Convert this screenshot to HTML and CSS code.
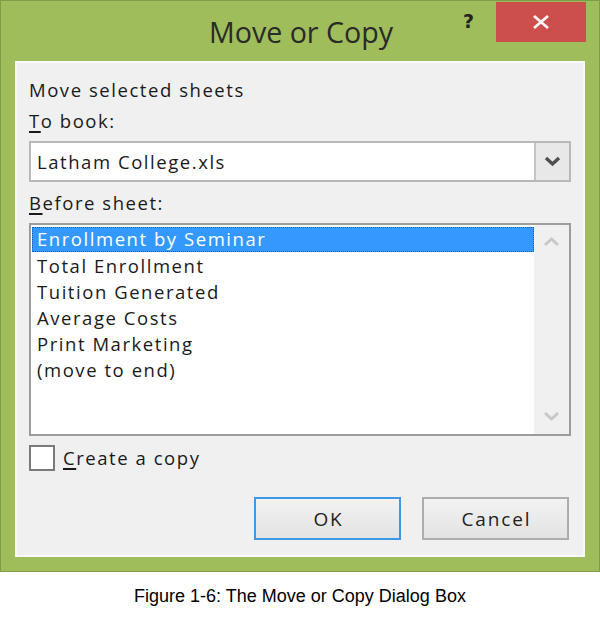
FILE: index.html
```html
<!DOCTYPE html>
<html>
<head>
<meta charset="utf-8">
<link rel="stylesheet" href="styles.css">
</head>
<body>
<div class="window">
  <div class="titlebar">
    <div class="spacer"></div>
    <div class="title">Move or Copy</div>
    <div class="controls">
      <span class="help">?</span>
      <span class="close">
        <svg width="18" height="14" viewBox="0 0 18 14"><path d="M2 1 L16 13 M16 1 L2 13" stroke="#fff" stroke-width="2.6" fill="none"/></svg>
      </span>
    </div>
  </div>
  <div class="panel">
    <div class="label first">Move selected sheets</div>
    <div class="label"><u>T</u>o book:</div>
    <div class="combo">
      <div class="combo-value">Latham College.xls</div>
      <div class="combo-btn">
        <svg width="17" height="11" viewBox="0 0 17 11"><path d="M2 2 L8.5 8 L15 2" stroke="#4f4f4f" stroke-width="3.4" fill="none"/></svg>
      </div>
    </div>
    <div class="label before"><u>B</u>efore sheet:</div>
    <div class="listbox">
      <div class="items">
        <div class="item selected">Enrollment by Seminar</div>
        <div class="item">Total Enrollment</div>
        <div class="item">Tuition Generated</div>
        <div class="item">Average Costs</div>
        <div class="item">Print Marketing</div>
        <div class="item">(move to end)</div>
      </div>
      <div class="scrollbar">
        <svg width="17" height="12" viewBox="0 0 17 12"><path d="M2 9 L8.5 3 L15 9" stroke="#c8c8c8" stroke-width="3" fill="none"/></svg>
        <svg width="17" height="12" viewBox="0 0 17 12"><path d="M2 3 L8.5 9 L15 3" stroke="#c8c8c8" stroke-width="3" fill="none"/></svg>
      </div>
    </div>
    <div class="checkrow">
      <span class="checkbox"></span>
      <span class="checklabel"><u>C</u>reate a copy</span>
    </div>
    <div class="buttons">
      <div class="btn ok">OK</div>
      <div class="btn">Cancel</div>
    </div>
  </div>
</div>
<div class="caption">Figure 1-6: The Move or Copy Dialog Box</div>
</body>
</html>
```
FILE: styles.css
```css
html, body {
  margin: 0;
  padding: 0;
  background: #ffffff;
}
body {
  width: 600px;
  font-family: "Open Sans", "Noto Sans", sans-serif;
}
.window {
  box-sizing: border-box;
  width: 600px;
  height: 572px;
  background: #9fbd5b;
  border: 1px solid #7f9d48;
  display: flex;
  flex-direction: column;
}
.titlebar {
  height: 60px;
  display: grid;
  grid-template-columns: 1fr auto 1fr;
  align-items: start;
}
.title {
  font-size: 28.6px;
  color: #2a2a2a;
  line-height: 40px;
  padding-top: 11px;
  padding-left: 2px;
}
.controls {
  justify-self: end;
  display: flex;
  align-items: flex-start;
  margin-right: 13px;
  margin-top: 1px;
}
.help {
  font-family: "DejaVu Sans", sans-serif;
  font-weight: bold;
  font-size: 19px;
  color: #222;
  line-height: 22px;
  margin-top: 8px;
  margin-right: 22px;
}
.close {
  width: 90px;
  height: 40px;
  background: #cc4f4c;
  display: flex;
  align-items: center;
  justify-content: center;
}
.panel {
  box-sizing: border-box;
  margin: 0 14px 0 14px;
  height: 496px;
  background: #f0f0f0;
  border: 2px solid #f9f9f9;
  padding: 14px 12px 0 12px;
  font-size: 18.5px;
  letter-spacing: 1.55px;
  color: #1a1a1a;
  display: flex;
  flex-direction: column;
}
.label {
  line-height: 26px;
  margin-top: 5px;
}
.label.first {
  margin-top: 0;
}
.label u, .checklabel u {
  text-decoration-thickness: 1.5px;
  text-underline-offset: 3px;
}
.combo {
  margin-top: 7px;
  height: 41px;
  box-sizing: border-box;
  border: 2px solid #b9b9b9;
  background: #ffffff;
  display: flex;
}
.combo-value {
  flex: 1;
  line-height: 37px;
  padding-left: 6px;
}
.combo-btn {
  width: 33px;
  background: #e8e8e8;
  border-left: 2px solid #c4c4c4;
  display: flex;
  align-items: center;
  justify-content: center;
}
.label.before {
  margin-top: 8px;
}
.listbox {
  margin-top: 7px;
  height: 213px;
  box-sizing: border-box;
  border: 2px solid #9c9c9c;
  background: #ffffff;
  display: flex;
}
.items {
  flex: 1;
  padding: 2px 0 0 1px;
}
.item {
  line-height: 26px;
  height: 26px;
  padding-left: 5px;
  box-sizing: border-box;
}
.item.selected {
  background: #3399ff;
  color: #ffffff;
  outline: 1px dotted #1a5ea8;
  outline-offset: -1px;
  height: 25px;
  line-height: 24px;
  margin-bottom: 1px;
}
.scrollbar {
  width: 35px;
  background: #f0f0f0;
  display: flex;
  flex-direction: column;
  justify-content: space-between;
  align-items: center;
  padding: 11px 0 12px 0;
}
.checkrow {
  margin-top: 9px;
  display: flex;
  align-items: center;
  height: 26px;
}
.checkbox {
  width: 26px;
  height: 26px;
  box-sizing: border-box;
  border: 2px solid #7a7a7a;
  background: #ffffff;
}
.checklabel {
  margin-left: 8px;
  line-height: 26px;
}
.buttons {
  margin-top: 26px;
  display: flex;
  justify-content: flex-end;
  gap: 21px;
  margin-right: 2px;
}
.btn {
  width: 147px;
  height: 43px;
  box-sizing: border-box;
  border: 2px solid #adadad;
  background: linear-gradient(#f2f2f2, #e3e3e3);
  display: flex;
  align-items: center;
  justify-content: center;
  font-size: 19px;
  letter-spacing: 1.9px;
  padding-left: 2px;
  color: #222;
}
.btn.ok {
  border-color: #3d98e6;
}
.caption {
  font-family: "Liberation Sans", Arial, sans-serif;
  font-size: 18px;
  line-height: 21px;
  text-align: center;
  margin-top: 14px;
  color: #000;
}
```
